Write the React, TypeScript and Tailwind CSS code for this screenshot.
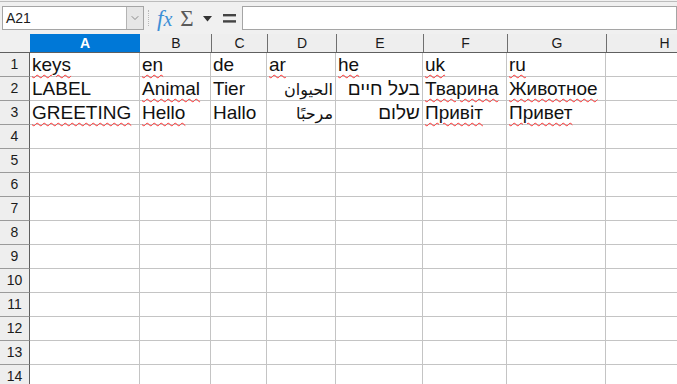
import { ChevronDown } from "lucide-react";

const cols = [
  { key: "A", w: "w-[110px]" },
  { key: "B", w: "w-[71px]" },
  { key: "C", w: "w-[56px]" },
  { key: "D", w: "w-[69px]" },
  { key: "E", w: "w-[87px]" },
  { key: "F", w: "w-[84px]" },
  { key: "G", w: "w-[99px]" },
  { key: "H", w: "w-[116px]" },
];

type Cell = { t: string; spell?: boolean; rtl?: "ar" | "he" };

const data: Cell[][] = [
  [
    { t: "keys", spell: true },
    { t: "en", spell: true },
    { t: "de" },
    { t: "ar", spell: true },
    { t: "he", spell: true },
    { t: "uk", spell: true },
    { t: "ru", spell: true },
  ],
  [
    { t: "LABEL" },
    { t: "Animal", spell: true },
    { t: "Tier" },
    { t: "الحيوان", rtl: "ar" },
    { t: "בעל חיים", rtl: "he" },
    { t: "Тварина", spell: true },
    { t: "Животное", spell: true },
  ],
  [
    { t: "GREETING", spell: true },
    { t: "Hello", spell: true },
    { t: "Hallo" },
    { t: "مرحبًا", rtl: "ar" },
    { t: "שלום", rtl: "he" },
    { t: "Привіт", spell: true },
    { t: "Привет", spell: true },
  ],
];

const rowCount = 14;

function Toolbar() {
  return (
    <div className="h-[34px] bg-[#f0f0f0] pt-px">
      <div className="flex h-[33px] items-start border-t border-[#bcbcbc] pt-1">
        <div className="ml-[2px] flex h-[24px] w-[142px] shrink-0 border border-[#a5a5a5] bg-white">
          <div className="flex flex-1 items-center pl-[3px] text-[14px] text-[#1b1b1b]">A21</div>
          <div className="flex w-[17px] items-center justify-center border-l border-[#b4b4b4] bg-[#e6e6e6]">
            <ChevronDown className="h-3 w-3 text-[#6b6b6b]" strokeWidth={1.5} />
          </div>
        </div>
        <div className="ml-[4px] mt-[4px] h-[16px] w-px border-l border-dotted border-[#b8b8b8]" />
        <div className="ml-[8px] flex h-[24px] items-center gap-[8px]">
          <span className="font-['Liberation_Serif'] text-[23px] italic leading-none text-[#3d8fd6]">
            f<span className="text-[20px]">x</span>
          </span>
          <span className="font-['Liberation_Serif'] text-[23px] leading-none text-[#5a5a5a]">Σ</span>
          <svg width="9" height="6" viewBox="0 0 9 6" className="ml-[1px] mt-[2px]">
            <path d="M0 0 L9 0 L4.5 5.5 Z" fill="#333" />
          </svg>
          <svg width="13" height="9" viewBox="0 0 13 9" className="ml-[3px]">
            <rect x="0" y="0" width="13" height="2.4" fill="#444" />
            <rect x="0" y="6.2" width="13" height="2.4" fill="#444" />
          </svg>
        </div>
        <div className="ml-[6px] h-[24px] flex-1 border border-[#a5a5a5] bg-white" />
      </div>
    </div>
  );
}

function HeaderRow() {
  return (
    <div className="flex h-[19px] border-b border-[#5f5f5f] bg-[#eeeeee] text-[14px] text-[#1b1b1b]">
      <div className="w-[30px] shrink-0 bg-[#f0f0f0]" />
      {cols.map((c) =>
        c.key === "A" ? (
          <div key={c.key} className={`${c.w} flex shrink-0 items-center justify-center bg-[#0078d7] font-bold text-white`}>
            A
          </div>
        ) : (
          <div
            key={c.key}
            className={`${c.w} flex shrink-0 items-center justify-center border-l border-[#6f6f6f] ${c.key === "B" ? "border-l-transparent" : ""}`}
          >
            {c.key}
          </div>
        ),
      )}
    </div>
  );
}

function CellText({ cell }: { cell?: Cell }) {
  if (!cell) return null;
  if (cell.rtl === "ar") {
    return (
      <span dir="rtl" className="font-['DejaVu_Sans'] text-[16px] leading-[21px] text-[#111]">
        {cell.t}
      </span>
    );
  }
  if (cell.rtl === "he") {
    return (
      <span dir="rtl" className="text-[19px] leading-[22px] text-[#111]">
        {cell.t}
      </span>
    );
  }
  return (
    <span
      className={
        "whitespace-nowrap text-[19px] leading-[22px] text-[#111] "
        + (cell.spell ? "underline decoration-[#ff3030] decoration-wavy decoration-1 underline-offset-[3px]" : "")
      }
    >
      {cell.t}
    </span>
  );
}

function Row({ n }: { n: number }) {
  const row = data[n - 1];
  return (
    <div className="flex h-[24px]">
      <div className="flex w-[30px] shrink-0 items-center justify-center border-b border-r border-b-[#9a9a9a] border-r-[#5f5f5f] bg-[#eeeeee] text-[14px] text-[#1b1b1b]">
        {n}
      </div>
      {cols.map((c, i) => {
        const cell = row?.[i];
        return (
          <div
            key={c.key}
            className={`${c.w} flex shrink-0 items-end border-b border-r border-[#c4c4c4] px-[2px] ${cell?.rtl ? "justify-end" : "justify-start"}`}
          >
            <CellText cell={cell} />
          </div>
        );
      })}
    </div>
  );
}

export default function App() {
  return (
    <div className="h-[384px] w-[677px] overflow-hidden bg-white font-['Liberation_Sans',sans-serif]">
      <Toolbar />
      <HeaderRow />
      {Array.from({ length: rowCount }, (_, i) => (
        <Row key={i} n={i + 1} />
      ))}
    </div>
  );
}
